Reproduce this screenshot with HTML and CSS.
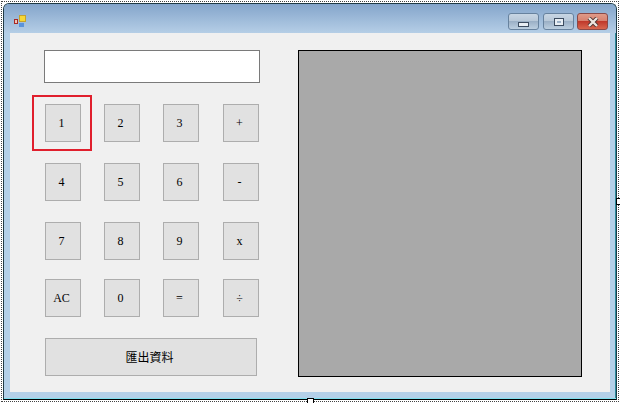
FILE: index.html
```html
<!DOCTYPE html>
<html lang="zh-Hant">
<head>
  <meta charset="UTF-8" />
  <title>Calculator Form</title>
  <link rel="stylesheet" href="styles.css">
</head>
<body>

  <div class="selection"></div>
  <div class="handle handle-right"></div>
  <div class="handle handle-bottom"></div>

  <div class="window">
    <div class="titlebar">
      <svg class="app-icon" width="14" height="14" viewBox="0 0 14 14">
        <rect x="6.5" y="0.5" width="6" height="6" fill="#f7d734" stroke="#c4a22c"/>
        <rect x="1.5" y="4.5" width="3" height="4" fill="#f0c4b8" stroke="#a82a24"/>
        <rect x="6" y="8" width="5" height="4" fill="#5b93dc"/>
      </svg>
      <div class="caption-buttons">
        <div class="caption-btn min"><span class="glyph-min"></span></div>
        <div class="caption-btn"><span class="glyph-max"></span></div>
        <div class="caption-btn close">
          <svg width="14" height="10" viewBox="0 0 14 10">
            <path d="M3 1 L11 9 M11 1 L3 9" stroke="#4a3230" stroke-width="4"/>
            <path d="M3 1 L11 9 M11 1 L3 9" stroke="#efe6e0" stroke-width="2.4"/>
          </svg>
        </div>
      </div>
    </div>

    <div class="client">
      <div class="left">
        <div class="display"></div>
        <div class="keypad">
          <div class="key">1</div>
          <div class="key">2</div>
          <div class="key">3</div>
          <div class="key">+</div>
          <div class="key">4</div>
          <div class="key">5</div>
          <div class="key">6</div>
          <div class="key">-</div>
          <div class="key">7</div>
          <div class="key">8</div>
          <div class="key">9</div>
          <div class="key">x</div>
          <div class="key">AC</div>
          <div class="key">0</div>
          <div class="key">=</div>
          <div class="key">÷</div>
        </div>
        <div class="export">匯出資料</div>
      </div>
      <div class="panel"></div>
    </div>
  </div>

  <div class="highlight"></div>

</body>
</html>
```

FILE: styles.css
```css
html, body {
  margin: 0;
  height: 100%;
}
body {
  width: 620px;
  height: 403px;
  overflow: hidden;
  background: #fff;
  position: relative;
  font-family: "Liberation Serif", "Noto Sans CJK TC", serif;
  font-size: 12px;
  color: #000;
}
.selection {
  position: absolute;
  left: 1px;
  top: 1px;
  width: 616px;
  height: 399px;
  border: 1px dotted #444;
}
.handle {
  position: absolute;
  width: 5px;
  height: 5px;
  background: #fff;
  border: 1px solid #000;
  z-index: 2;
}
.handle-right {
  left: 616px;
  top: 198px;
}
.handle-bottom {
  left: 307px;
  top: 398px;
}
.window {
  position: absolute;
  left: 3px;
  top: 3px;
  width: 612px;
  height: 395px;
  border: 1px solid #1f3a44;
  border-bottom-color: #000;
  border-radius: 6px 6px 0 0;
  background: #b4d0e8;
  display: flex;
  flex-direction: column;
  box-shadow: inset 0 -1px 0 #7fe0ee, inset -1px 0 0 #2c8c9c;
}
.titlebar {
  height: 29px;
  flex: none;
  display: flex;
  align-items: flex-start;
  justify-content: space-between;
  padding: 0 8px 0 9px;
  border-radius: 5px 5px 0 0;
  background: linear-gradient(#84a5cb, #b5cee6);
}
.app-icon {
  margin-top: 11px;
}
.caption-buttons {
  display: flex;
  gap: 3px;
  margin-top: 9px;
}
.caption-btn {
  width: 29px;
  height: 15px;
  border: 1px solid #67829e;
  border-radius: 3px;
  background: linear-gradient(#c8d6e4 0, #b8c8d8 45%, #9bb0c6 50%, #bccfe0 100%);
  display: flex;
  align-items: center;
  justify-content: center;
}
.caption-btn.min {
  margin-right: 1px;
}
.caption-btn.close {
  background: linear-gradient(#e09a88 0, #d88270 45%, #c0392b 50%, #d8674f 100%);
  border-color: #8a4a48;
}
.glyph-min {
  width: 9px;
  height: 3px;
  margin-top: 5px;
  background: #e8eef4;
  border: 1px solid #3c4c60;
}
.glyph-max {
  width: 4px;
  height: 2px;
  background: transparent;
  border: 2px solid #e8eef4;
  outline: 1px solid #3c4c60;
}
.client {
  margin: 0 6px;
  height: 359px;
  box-sizing: border-box;
  background: #f0f0f0;
  padding: 17px 0 0 34px;
  display: flex;
  align-items: flex-start;
  gap: 38px;
}
.left {
  width: 216px;
  display: flex;
  flex-direction: column;
  gap: 21px;
}
.display {
  height: 33px;
  box-sizing: border-box;
  background: #fff;
  border: 1px solid #7a7a7a;
}
.keypad {
  display: grid;
  grid-template-columns: 59px 59px 60px 36px;
  grid-template-rows: 59px 59px 57px 38px;
  margin-left: 1px;
}
.key,
.export {
  box-sizing: border-box;
  background: #e1e1e1;
  border: 1px solid #adadad;
  display: flex;
  align-items: center;
  justify-content: center;
  padding-right: 3px;
}
.key {
  width: 36px;
  height: 38px;
}
.export {
  width: 212px;
  height: 38px;
  margin-left: 1px;
}
.panel {
  width: 284px;
  height: 327px;
  box-sizing: border-box;
  background: #a9a9a9;
  border: 1px solid #000;
}
.highlight {
  position: absolute;
  left: 32px;
  top: 95px;
  width: 56px;
  height: 52px;
  border: 2px solid #e01f2d;
  z-index: 3;
}
```
